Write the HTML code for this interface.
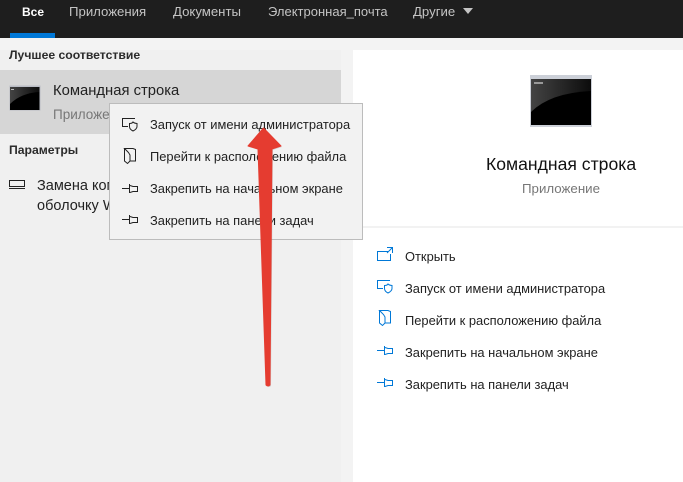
<!DOCTYPE html>
<html><head><meta charset="utf-8">
<style>
html,body{margin:0;padding:0}
body{width:683px;height:482px;position:relative;overflow:hidden;background:#f3f3f3;font-family:"Liberation Sans",sans-serif;color:#222}
.a{position:absolute}
.t{position:absolute;white-space:nowrap;line-height:16px}
.tab{color:#c4c4c4;font-size:13.2px;top:4px}
.m{font-size:12.9px;color:#222}
svg{position:absolute;overflow:visible}
</style></head><body>
<div class="a" style="left:0;top:0;width:683px;height:38px;background:#1e1e1e"></div>
<div class="a" style="left:10px;top:33px;width:45px;height:5px;background:#0078d7"></div>
<div class="t tab" style="left:22px;color:#fff;font-weight:bold;font-size:12px;">Все</div>
<div class="t tab" style="left:69px">Приложения</div>
<div class="t tab" style="left:173px">Документы</div>
<div class="t tab" style="left:268px;font-size:13px">Электронная_почта</div>
<div class="t tab" style="left:413px">Другие</div>
<div class="a" style="left:463px;top:8px;width:0;height:0;border-left:5px solid transparent;border-right:5px solid transparent;border-top:6px solid #c4c4c4"></div>

<div class="a" style="left:0;top:38px;width:341px;height:444px;background:#f0f0f0"></div>
<div class="a" style="left:0;top:38px;width:341px;height:12px;background:#f3f3f3"></div>
<div class="a" style="left:353px;top:50px;width:330px;height:432px;background:#fff"></div>
<div class="a" style="left:363px;top:226px;width:320px;height:2px;background:#f2f2f2"></div>

<div class="t" style="left:9px;top:47px;font-size:12.2px;font-weight:bold;color:#2b2b2b">Лучшее соответствие</div>
<div class="a" style="left:0;top:70px;width:341px;height:64px;background:#d6d6d6"></div>
<svg style="left:9px;top:85px" width="32" height="26"><defs><linearGradient id="g1" x1="0" x2="1" y1="0" y2="0"><stop offset="0" stop-color="#444"/><stop offset="1" stop-color="#0c0c0c"/></linearGradient></defs><rect x=".5" y=".5" width="31" height="25" fill="#b9bcc4"/><rect x="1" y="2" width="29.500" height="23" fill="url(#g1)"/><path d="M1 19Q12 8 30.500 7V25H1Z" fill="#000"/><rect x="2" y="4" width="3" height="1" fill="#bbb"/></svg>
<div class="t" style="left:53px;top:83px;font-size:14.8px;color:#222">Командная строка</div>
<div class="t" style="left:53px;top:107px;font-size:13.500px;color:#777">Приложение</div>
<div class="t" style="left:9px;top:142px;font-size:12.2px;font-weight:bold;color:#2b2b2b">Параметры</div>
<svg style="left:9px;top:180px" width="17" height="10" fill="none" stroke="#222" stroke-width="1"><rect x=".5" y=".5" width="15" height="6"/><path d="M0 8.500h16"/></svg>
<div class="t" style="left:37px;top:178px;font-size:14.500px">Замена командной</div>
<div class="t" style="left:37px;top:198px;font-size:14.500px">оболочку Windows</div>

<div class="a" style="left:109px;top:103px;width:254px;height:137px;background:#f2f2f2;border:1px solid #bcbcbc;box-sizing:border-box"></div>
<svg style="left:122px;top:118px" width="16" height="15" fill="none" stroke="#222"><path d="M13 .5H.5v8H6"/><path d="M7.500 5.500c2 0 3-.5 3.500-1.500 1 1 2 1.500 4 1.500v3c0 2-2 3.500-4 4.500-2-1-3.500-2.500-3.500-4.500z"/></svg>
<svg style="left:124px;top:148px" width="13" height="17" fill="none" stroke="#222"><path d="M.5.500h8.500l2.500 1v11.500H6V7L4.500 4.500z"/><path d="M.5.500v12.500l3 2.500 2.500-2.500"/></svg>
<svg style="left:122px;top:182px" width="16" height="12" fill="none" stroke="#222"><path d="M0 6.500h7M7.500 2v9M8 3.500l3 1h4.500v5H11l-3 1"/></svg>
<svg style="left:122px;top:213px" width="16" height="12" fill="none" stroke="#222"><path d="M0 6.500h7M7.500 2v9M8 3.500l3 1h4.500v5H11l-3 1"/></svg>
<div class="t m" style="left:150px;top:117px">Запуск от имени администратора</div>
<div class="t m" style="left:150px;top:149px">Перейти к расположению файла</div>
<div class="t m" style="left:150px;top:181px">Закрепить на начальном экране</div>
<div class="t m" style="left:150px;top:213px">Закрепить на панели задач</div>

<svg style="left:530px;top:75px" width="62" height="52"><defs><linearGradient id="g2" x1="0" x2="1" y1="0" y2="0"><stop offset="0" stop-color="#444"/><stop offset="1" stop-color="#0c0c0c"/></linearGradient></defs><rect x="0" y="0" width="62" height="52" fill="#ccd0d8"/><rect x="1" y="4" width="60" height="46" fill="url(#g2)"/><path d="M1 37Q20 18 61 16V50H1Z" fill="#000"/><rect x="4" y="7" width="9" height="2" fill="#999"/></svg>
<div class="t" style="left:486px;top:154px;font-size:17.600px;color:#111;line-height:20px">Командная строка</div>
<div class="t" style="left:522px;top:181px;font-size:13.300px;color:#777">Приложение</div>

<svg style="left:377px;top:247px" width="17" height="15" fill="none" stroke="#0078d7"><path d="M11 4.500H.5v9h13V7M10 .5h5.500V6M15.500 .5L10 6"/></svg>
<svg style="left:377px;top:280px" width="16" height="15" fill="none" stroke="#0078d7"><path d="M13 .5H.5v8H6"/><path d="M7.500 5.500c2 0 3-.5 3.500-1.500 1 1 2 1.500 4 1.500v3c0 2-2 3.500-4 4.500-2-1-3.500-2.500-3.500-4.500z"/></svg>
<svg style="left:379px;top:310px" width="13" height="17" fill="none" stroke="#0078d7"><path d="M.5.500h8.500l2.500 1v11.500H6V7L4.500 4.500z"/><path d="M.5.500v12.500l3 2.500 2.500-2.500"/></svg>
<svg style="left:377px;top:344px" width="16" height="12" fill="none" stroke="#0078d7"><path d="M0 6.500h7M7.500 2v9M8 3.500l3 1h4.500v5H11l-3 1"/></svg>
<svg style="left:377px;top:376px" width="16" height="12" fill="none" stroke="#0078d7"><path d="M0 6.500h7M7.500 2v9M8 3.500l3 1h4.500v5H11l-3 1"/></svg>
<div class="t m" style="left:405px;top:249px">Открыть</div>
<div class="t m" style="left:405px;top:281px">Запуск от имени администратора</div>
<div class="t m" style="left:405px;top:313px">Перейти к расположению файла</div>
<div class="t m" style="left:405px;top:345px">Закрепить на начальном экране</div>
<div class="t m" style="left:405px;top:377px">Закрепить на панели задач</div>

<svg style="left:0;top:0" width="683" height="482"><path d="M264 129L248 146 258 149 266 385Q268 387 270 385L272 149 281 146 264 128Z" fill="#9a9a9a" opacity=".35" transform="translate(1 1)"/><path d="M263.500 128L248 146 258 149 266 385Q268 387 270 385L272 149 281 146Z" fill="#e53c30" stroke="#e53c30" stroke-width="1" stroke-linejoin="round"/></svg>
</body></html>
